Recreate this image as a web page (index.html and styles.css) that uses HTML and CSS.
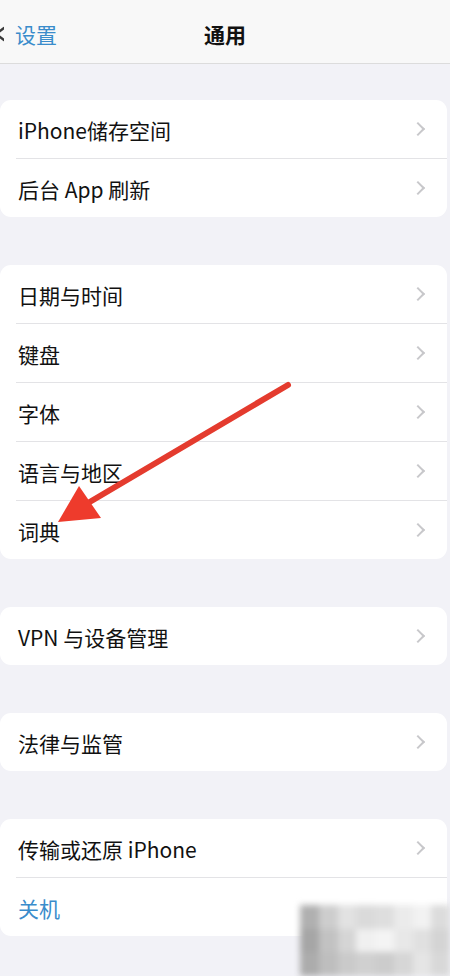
FILE: index.html
```html
<!DOCTYPE html>
<html lang="zh-CN">
<head>
  <meta charset="UTF-8" />
  <meta name="viewport" content="width=device-width, initial-scale=1.0" />
  <title>通用</title>
  <link rel="stylesheet" href="styles.css">
</head>
<body>
  <!-- Barra de navegação -->
  <div class="nav">
    <span class="back">
      <svg class="back-icon" width="4" height="22" viewBox="0 0 4 22"><path d="M4 5 L-4 11 L4 17" fill="none" stroke="#3a3a3a" stroke-width="2.4" stroke-linecap="round" stroke-linejoin="round"/></svg>
      设置
    </span>
    <span class="title">通用</span>
  </div>

  <div class="content">
    <div class="group">
      <div class="row"><span>iPhone储存空间</span><i class="chev"></i></div>
      <div class="row"><span>后台 App 刷新</span><i class="chev"></i></div>
    </div>

    <div class="group">
      <div class="row"><span>日期与时间</span><i class="chev"></i></div>
      <div class="row"><span>键盘</span><i class="chev"></i></div>
      <div class="row"><span>字体</span><i class="chev"></i></div>
      <div class="row"><span>语言与地区</span><i class="chev"></i></div>
      <div class="row"><span>词典</span><i class="chev"></i></div>
    </div>

    <div class="group">
      <div class="row"><span>VPN 与设备管理</span><i class="chev"></i></div>
    </div>

    <div class="group">
      <div class="row"><span>法律与监管</span><i class="chev"></i></div>
    </div>

    <div class="group">
      <div class="row"><span>传输或还原 iPhone</span><i class="chev"></i></div>
      <div class="row link"><span>关机</span></div>
    </div>
  </div>

  <!-- Seta vermelha por cima da lista -->
  <svg class="arrow" width="450" height="976" viewBox="0 0 450 976">
    <line x1="288" y1="385" x2="88" y2="503" stroke="#e43b2e" stroke-width="6" stroke-linecap="round"/>
    <polygon points="58,522 79,486 101,518" fill="#ee3b2c"/>
  </svg>

  <!-- Marca d'água pixelada -->
  <div class="mosaic">
    <i style="background:#b0b0b0"></i><i style="background:#cdcdcd"></i><i style="background:#e2e2e2"></i><i style="background:#dadada"></i><i style="background:#dedede"></i><i style="background:#ebebeb"></i><i style="background:#f2f2f2"></i><i style="background:#dcdcdc"></i>
    <i style="background:#a6a6a6"></i><i style="background:#c2c2c2"></i><i style="background:#d5d5d5"></i><i style="background:#f0f0f0"></i><i style="background:#f4f4f4"></i><i style="background:#e8e8e8"></i><i style="background:#e0e0e0"></i><i style="background:#d4d4d4"></i>
    <i style="background:#acacac"></i><i style="background:#bebebe"></i><i style="background:#cacaca"></i><i style="background:#d0d0d0"></i><i style="background:#cccccc"></i><i style="background:#d6d6d6"></i><i style="background:#e5e5e5"></i><i style="background:#d8d8d8"></i>
  </div>
</body>
</html>
```

FILE: styles.css
```css
/* Base */
body {
  margin: 0;
  width: 450px;
  min-height: 976px;
  background-color: #f2f2f7;
  font-family: "Noto Sans CJK SC", "Noto Sans", sans-serif;
  color: #111;
  position: relative;
  overflow: hidden;
}

/* Barra superior */
.nav {
  height: 63px;
  background-color: #f8f8f8;
  border-bottom: 1px solid #dcdcdc;
  display: flex;
  align-items: center;
  justify-content: center;
  position: relative;
}

.back {
  position: absolute;
  left: 0;
  top: 19px;
  display: flex;
  align-items: center;
  gap: 11px;
  font-size: 21px;
  color: #3a8ccb;
}

.title {
  font-size: 21px;
  font-weight: bold;
  margin-top: 4px;
}

/* Grupos de opções */
.content {
  padding-top: 36px;
  display: flex;
  flex-direction: column;
  gap: 48px;
}

.group {
  background-color: #fff;
  border-radius: 11px;
  margin-right: 3px;
}

.row {
  height: 58px;
  display: flex;
  align-items: center;
  justify-content: space-between;
  padding: 0 20px 0 18px;
  font-size: 21px;
  position: relative;
}

.row span {
  margin-top: 2px;
}

.row + .row {
  border-top: 1px solid #e3e3e6;
  margin-left: 16px;
  padding-left: 2px;
}

.row.link {
  color: #3a8ccb;
}

.chev {
  width: 8px;
  height: 8px;
  border-top: 2px solid #c8c8cb;
  border-right: 2px solid #c8c8cb;
  transform: rotate(45deg);
  margin-right: 4px;
}

/* Seta */
.arrow {
  position: absolute;
  left: 0;
  top: 0;
  pointer-events: none;
}

/* Marca d'água */
.mosaic {
  position: absolute;
  left: 300px;
  top: 905px;
  width: 150px;
  height: 71px;
  display: grid;
  grid-template-columns: repeat(8, 1fr);
  grid-template-rows: repeat(3, 1fr);
  filter: blur(3px);
}
```
